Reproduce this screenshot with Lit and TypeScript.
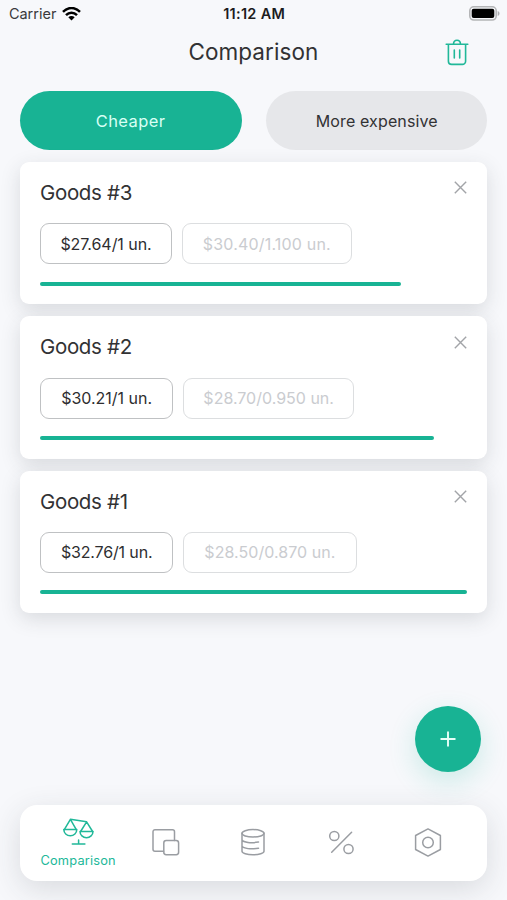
import { LitElement, html, css, svg } from "lit";
import { customElement, property, state } from "lit/decorators.js";
import { classMap } from "lit/directives/class-map.js";
import { styleMap } from "lit/directives/style-map.js";

interface Goods {
  name: string;
  unit: number;
  unitText: string;
  priceText: string;
  spacing: string;
}

const GOODS: Goods[] = [
  { name: "Goods #3", unit: 27.64, unitText: "$27.64/1 un.", priceText: "$30.40/1.100 un.", spacing: "g3" },
  { name: "Goods #2", unit: 30.21, unitText: "$30.21/1 un.", priceText: "$28.70/0.950 un.", spacing: "g2" },
  { name: "Goods #1", unit: 32.76, unitText: "$32.76/1 un.", priceText: "$28.50/0.870 un.", spacing: "g1" },
];

const icons = {
  scales: svg`<path d="M7.4 1.3 23.6 3.8M7.4 1.3 1.3 11.600M7.4 1.3 13.300 11.600M23.600 3.800 17.600 13.500M23.600 3.800 29.600 13.500"/>
    <path d="M.8 11.600h13a6.500 6.200 0 0 1-13 0ZM17 13.500h13a6.500 6.200 0 0 1-13 0ZM9.300 26h12.600M15.600 26v-4"/>`,
  squares: svg`<path d="M11.600 23.200H3a2 2 0 0 1-2-2V3.700a2 2 0 0 1 2-2h17.500a2 2 0 0 1 2 2v8.700"/>
    <rect x="11.800" y="12.500" width="14.800" height="14.200" rx="2.400"/>`,
  coins: svg`<ellipse cx="14" cy="5.300" rx="11" ry="3.700"/>
    <path d="M3 5.300v17.900c0 2 5 3.600 11 3.600s11-1.600 11-3.600V5.300M3 12c1.500 2.400 9 3.400 16.500 2M3 18.200c1.500 2.400 9 3.400 16.500 2"/>`,
  percent: svg`<circle cx="7.300" cy="8" r="4.600"/><circle cx="21.500" cy="21" r="4.600"/><path d="M24.600 4.300 4.700 24.300"/>`,
  nut: svg`<path d="M14 .9 26.400 7.500v14L14 28.100 1.600 21.500v-14Z"/><circle cx="14" cy="14.500" r="5.300"/>`,
};

@customElement("goods-card")
class GoodsCard extends LitElement {
  static styles = css`
    :host { display: block; }
    .card {
      box-sizing: border-box;
      height: 142.300px;
      padding: 19px 20px 0 19.500px;
      border-radius: 9px;
      background: #fff;
      box-shadow: 0 6px 20px rgba(50, 52, 58, 0.150);
    }
    .head { display: flex; justify-content: space-between; height: 42.300px; }
    .name { font-size: 20.500px; line-height: 24px; letter-spacing: -0.300px; color: #323234; }
    .close { width: 13px; height: 13px; margin-top: 0.500px; margin-right: 0.500px; stroke: #a2a4a8; stroke-width: 1.400; fill: none; }
    .chips { display: flex; gap: 9.500px; height: 41px; }
    .chip {
      box-sizing: border-box;
      display: flex;
      align-items: center;
      justify-content: center;
      width: 133.500px;
      border: 1.300px solid #bfc1c3;
      border-radius: 9px;
      font-size: 16px;
      white-space: nowrap;
      color: #2e2e30;
    }
    .total { border-color: #dcdee0; color: #caccd0; width: 171.500px; }
    .g3 .unit { width: 132.300px; letter-spacing: -0.050px; }
    .g3 .total { width: 170.300px; letter-spacing: 0.180px; }
    .g1 .unit { letter-spacing: -0.150px; }
    .g1 .total { width: 174px; letter-spacing: 0.050px; }
    .bar { height: 4px; margin-top: 17.500px; border-radius: 2px; background: #18b394; }
  `;
  @property({ attribute: false }) goods!: Goods;
  @property({ type: Number }) share = 1;

  render() {
    return html`<article class="card ${this.goods.spacing}">
      <div class="head">
        <div class="name">${this.goods.name}</div>
        <svg class="close" viewBox="0 0 13 13"><path d="M.8.8 12.200 12.200M12.200.8.8 12.200" /></svg>
      </div>
      <div class="chips">
        <div class="chip unit">${this.goods.unitText}</div>
        <div class="chip total">${this.goods.priceText}</div>
      </div>
      <div class="bar" style=${styleMap({ width: `${this.share * 100}%` })}></div>
    </article>`;
  }
}

@customElement("app-root")
class AppRoot extends LitElement {
  static styles = css`
    :host {
      display: flex;
      flex-direction: column;
      position: relative;
      box-sizing: border-box;
      width: 507px;
      height: 900px;
      padding: 0 19.600px 19.500px 20.400px;
      overflow: hidden;
      background: #f7f8fb;
      font-family: Inter, "Liberation Sans", sans-serif;
    }
    svg { display: block; fill: none; }
    .status { display: grid; grid-template-columns: 1fr auto 1fr; align-items: center; height: 27px; margin: 0 -13px 0 -11.500px; font-size: 14.500px; color: #222; }
    .carrier { display: flex; align-items: center; gap: 5.500px; color: #3a3a3c; }
    .time { font-weight: 600; letter-spacing: 0.300px; margin-right: 1px; color: #1c1c1e; }
    .wifi { width: 19px; height: 14px; }
    .battery { justify-self: end; width: 31px; height: 15px; }
    .header { display: grid; grid-template-columns: 1fr auto 1fr; align-items: center; height: 50px; }
    .title { grid-column: 2; font-size: 22.500px; letter-spacing: 0.080px; margin: 0 1px 2px 0; color: #323234; }
    .trash { justify-self: end; width: 24px; height: 27px; margin-right: 18.500px; stroke: #21b899; stroke-width: 1.600; stroke-linecap: round; stroke-linejoin: round; }
    .tabs { display: grid; grid-template-columns: 1fr 1fr; gap: 24.500px; height: 58.700px; margin-top: 14.300px; }
    .tab { border: 0; border-radius: 30px; background: #e6e7ea; color: #323234; font: 400 16px Inter, sans-serif; letter-spacing: 0.120px; padding: 0; }
    .tab.active { background: #18b394; color: #d9fff5; font-size: 16.500px; letter-spacing: 0.400px; padding-right: 1px; }
    .list { display: grid; gap: 12px; margin-top: 12px; }
    .fab {
      position: absolute;
      right: 26px;
      bottom: 128.500px;
      width: 66px;
      height: 66px;
      border-radius: 50%;
      background: #18b394;
      box-shadow: 0 9px 28px rgba(24, 179, 148, 0.200);
      display: grid;
      place-items: center;
    }
    .plus { width: 16px; height: 16px; stroke: #e6fff8; stroke-width: 1.900; }
    .nav {
      display: grid;
      grid-template-columns: repeat(5, 1fr);
      height: 76px;
      margin-top: auto;
      padding: 0 15.500px 0 14px;
      border-radius: 17px;
      background: #fff;
      box-shadow: 0 8px 30px rgba(50, 52, 58, 0.150);
    }
    .item { display: flex; flex-direction: column; align-items: center; justify-content: center; color: #9a9da2; }
    .item.active { gap: 8.500px; padding-top: 2px; color: #21b899; }
    .icon { width: 28px; height: 29px; stroke: currentColor; stroke-width: 1.500; stroke-linecap: round; stroke-linejoin: round; }
    .active .icon { width: 31px; height: 27px; }
    .label { font-size: 12.800px; line-height: 16px; letter-spacing: 0.180px; }
  `;
  @state() private tab = 0;

  render() {
    const top = Math.max(...GOODS.map((g) => g.unit));
    const nav = [icons.scales, icons.squares, icons.coins, icons.percent, icons.nut];
    return html`
      <div class="status">
        <div class="carrier">
          <span>Carrier</span>
          <svg class="wifi" viewBox="0 0 19 14">
            <path d="M1 4.900C6-.3 13-.3 18 4.900M4 8.200c3.200-3.300 7.800-3.300 11 0" stroke="#000" stroke-width="2.500" />
            <path d="M6.300 10.300c1.900-1.700 4.500-1.700 6.400 0L9.500 13.600Z" fill="#000" />
          </svg>
        </div>
        <div class="time">11:12 AM</div>
        <svg class="battery" viewBox="0 0 31 15">
          <rect x=".8" y=".8" width="26.400" height="13.200" rx="4" stroke="#b4b5b7" stroke-width="1.600" />
          <rect x="2.700" y="2.700" width="22.600" height="9.400" rx="2" fill="#000" />
          <path d="M28.700 5v5c1.200-.4 1.800-1.400 1.800-2.500S29.900 5.400 28.700 5Z" fill="#aeafb2" />
        </svg>
      </div>
      <div class="header">
        <div class="title">Comparison</div>
        <svg class="trash" viewBox="0 0 24 27">
          <path d="M1.200 5.200h21.600M3.400 5.200v17a3.200 3.200 0 0 0 3.200 3.200h10.800a3.200 3.200 0 0 0 3.200-3.200v-17M8.500 5c.2-5 6.800-5 7 0M9.300 11v8M14.700 11v8" />
        </svg>
      </div>
      <div class="tabs">
        ${["Cheaper", "More expensive"].map(
          (t, i) => html`<button class=${classMap({ tab: true, active: this.tab === i })} @click=${() => (this.tab = i)}>${t}</button>`
        )}
      </div>
      <div class="list">
        ${GOODS.map((g) => html`<goods-card .goods=${g} .share=${g.unit / top}></goods-card>`)}
      </div>
      <div class="nav">
        ${nav.map(
          (icon, i) => html`<div class=${classMap({ item: true, active: i === 0 })}>
            <svg class="icon" viewBox=${i === 0 ? "0 0 31 27" : "0 0 28 29"}>${icon}</svg>
            ${i === 0 ? html`<div class="label">Comparison</div>` : ""}
          </div>`
        )}
      </div>
      <div class="fab"><svg class="plus" viewBox="0 0 16 16"><path d="M8 .5v15M.5 8h15" /></svg></div>
    `;
  }
}
